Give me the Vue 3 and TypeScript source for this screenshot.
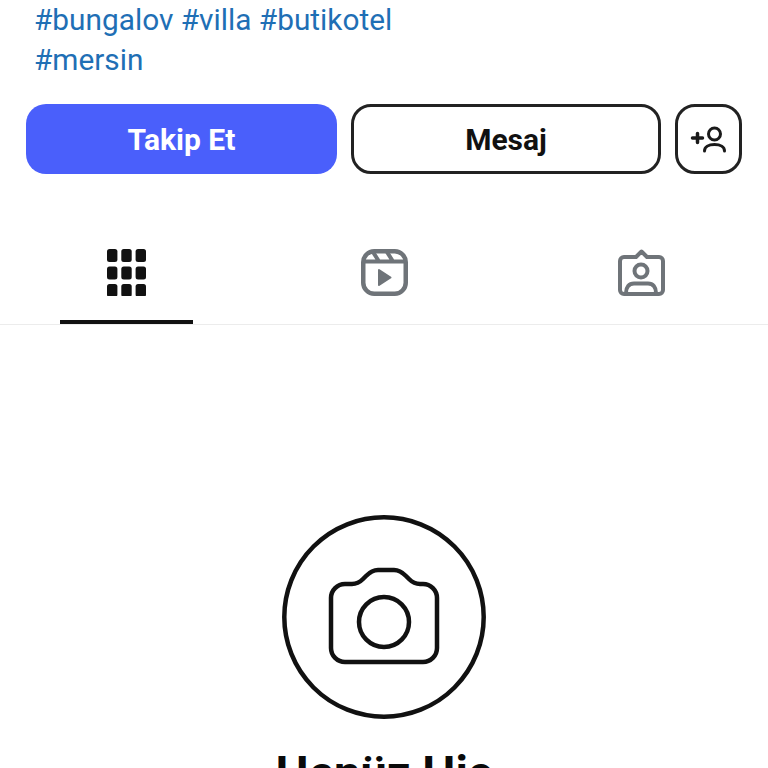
<script setup lang="ts">
// Profil ekranı: etiketler, butonlar, sekmeler ve boş durum
const hashtagLines = ['#bungalov #villa #butikotel', '#mersin']
const gridCells = [249, 266.5, 284].flatMap((y) =>
  [0, 14.3, 28.6].map((x) => ({ x, y: y - 249 })),
)
</script>

<template>
  <main class="profile">
    <p class="tags">
      <span v-for="line in hashtagLines" :key="line" class="tag-line">{{ line }}</span>
    </p>

    <div class="actions">
      <button class="btn btn-primary">Takip Et</button>
      <button class="btn btn-outline">Mesaj</button>
      <button class="btn btn-outline btn-icon" aria-label="Kişi ekle">
        <svg width="38" height="32" viewBox="0 0 38 32" fill="none" stroke="#1a1a1a" stroke-width="3" stroke-linecap="round">
          <path d="M2.500 15h10M7.500 10.500v9" stroke-width="3.500" />
          <circle cx="24.500" cy="11" r="6" />
          <path d="M14.500 28c0-4 4-6.500 10-6.500s10 2.500 10 6.500" />
        </svg>
      </button>
    </div>

    <nav class="tabs">
      <div class="tab tab-active">
        <svg width="39" height="47" viewBox="0 0 39 47" fill="#111">
          <rect v-for="cell in gridCells" :key="`${cell.x}-${cell.y}`" :x="cell.x" :y="cell.y" width="10.400" height="13" rx="2.500" />
        </svg>
        <span class="tab-line"></span>
      </div>
      <div class="tab">
        <svg width="47" height="47" viewBox="0 0 47 47" fill="none" stroke="#6f7479" stroke-width="4.500" stroke-linejoin="round">
          <rect x="2.250" y="2.250" width="42.500" height="42.500" rx="11" />
          <path d="M3 12.500h41M12 3l6 9.500M26 3l6 9.500" stroke-width="4" />
          <path d="M18 21l11.500 7.500L18 36z" fill="#6f7479" stroke-width="2" />
        </svg>
        <span class="tab-line tab-line-empty"></span>
      </div>
      <div class="tab">
        <svg width="47" height="47" viewBox="0 0 47 47" fill="none" stroke="#6f7479" stroke-width="4" stroke-linejoin="round" stroke-linecap="round">
          <path d="M6 8h12l5.500-5.500L29 8h12a4 4 0 0 1 4 4v29a4 4 0 0 1-4 4H6a4 4 0 0 1-4-4V12a4 4 0 0 1 4-4z" />
          <circle cx="23" cy="22" r="6.500" />
          <path d="M8 44c0-6 3-9.500 8-9.500h14c5 0 8 3.500 8 9.500" />
        </svg>
        <span class="tab-line tab-line-empty"></span>
      </div>
    </nav>

    <section class="empty">
      <svg width="204" height="204" viewBox="0 0 204 204" fill="none" stroke="#111" stroke-width="4.500" stroke-linejoin="round">
        <circle cx="102" cy="102" r="99.700" />
        <path d="M63 69h7c5 0 8-2 11-5l3-3c4-4 7-6 12-6h16c5 0 8 2 12 6l3 3c3 3 6 5 11 5h3a14 14 0 0 1 14 14v50a14 14 0 0 1-14 14H63a14 14 0 0 1-14-14V83a14 14 0 0 1 14-14z" />
        <circle cx="102" cy="107" r="25" />
      </svg>
      <h2 class="empty-title">Henüz Hiç</h2>
    </section>
  </main>
</template>

<style>
html,
body {
  margin: 0;
  height: 768px;
  overflow: hidden;
  background: #fff;
}
</style>

<style scoped>
.profile {
  height: 768px;
  overflow: hidden;
  font-family: Roboto, "Liberation Sans", sans-serif;
  color: #111;
}

.tags {
  margin: 0;
  padding-left: 34px;
  font-size: 29.800px;
  line-height: 39.500px;
  color: #1f6fb5;
}

.tag-line {
  display: block;
}

.actions {
  display: grid;
  grid-template-columns: 311px 310px 67px;
  column-gap: 14px;
  padding: 25px 26px 0;
}

.btn {
  height: 70px;
  padding: 0;
  border: 3px solid #222;
  border-radius: 20px;
  background: #fff;
  font-family: inherit;
  font-size: 30px;
  font-weight: 700;
  color: #111;
}

.btn-primary {
  border: none;
  background: #4a5ffb;
  color: #fff;
}

.btn-icon {
  display: flex;
  align-items: center;
  justify-content: center;
}

.tabs {
  display: grid;
  grid-template-columns: repeat(3, 257.500px);
  justify-content: center;
  margin-top: 75px;
  border-bottom: 1px solid #ececec;
}

.tab {
  display: flex;
  flex-direction: column;
  align-items: center;
  gap: 24px;
}

.tab svg {
  display: block;
}

.tab-line {
  width: 133px;
  height: 4px;
  background: #111;
}

.tab-line-empty {
  background: transparent;
}

.empty {
  display: flex;
  flex-direction: column;
  align-items: center;
  padding-top: 190px;
}

.empty svg {
  display: block;
}

.empty-title {
  margin: 27px 0 0;
  font-size: 47px;
  line-height: 54px;
  font-weight: 700;
  color: #0a0a0a;
}
</style>
